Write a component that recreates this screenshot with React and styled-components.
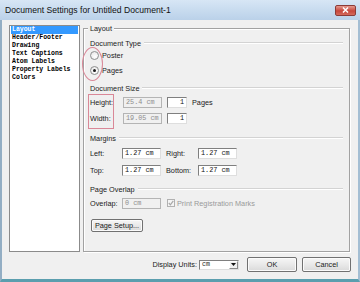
import React from "react";
import styled, { createGlobalStyle } from "styled-components";

const GlobalStyle = createGlobalStyle`
  html, body { margin: 0; padding: 0; background: #ffffff; }
  body { font-family: "Liberation Sans", Arial, sans-serif; }
`;

const Window = styled.div`
  width: 360px;
  height: 282px;
  display: flex;
  flex-direction: column;
  overflow: hidden;
  background: #f0f0f0;
`;

const TitleBar = styled.div`
  height: 20px;
  flex: none;
  display: flex;
  align-items: center;
  justify-content: space-between;
  padding: 0 4px 0 5px;
  box-sizing: border-box;
  background: linear-gradient(#d7e6f5, #bad1e9);
  font-size: 8.6px;
  color: #111;
`;

const CloseButton = styled.div`
  width: 21px;
  height: 11px;
  box-sizing: border-box;
  display: flex;
  align-items: center;
  justify-content: center;
  border: 1px solid #8c3b37;
  border-radius: 2px;
  background: linear-gradient(#e59a8f, #c7463b 55%, #d46a5c);
`;

const Frame = styled.div`
  flex: 1;
  display: flex;
  flex-direction: column;
  box-sizing: border-box;
  border-left: 2px solid #93aec4;
  border-right: 2px solid #a4bed3;
  border-bottom: 3px solid #5b9eae;
  padding: 5px 8px 7px 7px;
`;

const MainRow = styled.div`
  height: 227px;
  flex: none;
  display: flex;
  gap: 3px;
`;

const List = styled.ul`
  width: 71px;
  flex: none;
  margin: 0;
  padding: 0 1px;
  list-style: none;
  box-sizing: border-box;
  background: #fff;
  border: 1px solid #8b8b8b;
  font-family: "Liberation Mono", "Courier New", monospace;
  font-size: 6.5px;
  font-weight: bold;
  line-height: 8px;
`;

const Item = styled.li`
  padding-left: 1px;
  white-space: nowrap;
  background: ${(p) => (p.$selected ? "#3399ff" : "transparent")};
  color: ${(p) => (p.$selected ? "#fff" : "#000")};
`;

const Group = styled.div`
  position: relative;
  flex: 1;
  margin-top: 3px;
  box-sizing: border-box;
  border: 1px solid #a2a2a2;
  box-shadow: inset 1px 1px 0 #fff, 1px 1px 0 #fff;
  padding: 9px 6px 0 6px;
  display: flex;
  flex-direction: column;
  font-size: 7.3px;
  color: #1b1b1b;
`;

const Legend = styled.span`
  position: absolute;
  top: -5px;
  left: 4px;
  padding: 0 2px;
  line-height: 9px;
  background: #f0f0f0;
`;

const SectionHead = styled.div`
  display: flex;
  align-items: center;
  gap: 3px;
  height: 10px;
  margin-top: ${(p) => p.$mt || 0}px;
  white-space: nowrap;
  &::after {
    content: "";
    flex: 1;
    border-top: 1px solid #d3d3d3;
    border-bottom: 1px solid #fff;
  }
`;

const Row = styled.div`
  display: flex;
  align-items: center;
  height: 12px;
  margin-top: ${(p) => p.$mt || 0}px;
  gap: ${(p) => p.$gap || 0}px;
  white-space: nowrap;
`;

const Radio = styled.span`
  width: 9px;
  height: 9px;
  box-sizing: border-box;
  border-radius: 50%;
  border: 1px solid #8e8f8f;
  background: radial-gradient(circle at 60% 65%, #ffffff, #e3e3e3);
  display: flex;
  align-items: center;
  justify-content: center;
  &::after {
    content: "";
    width: 3px;
    height: 3px;
    border-radius: 50%;
    background: ${(p) => (p.$checked ? "#1c1c1c" : "transparent")};
  }
`;

const FieldLabel = styled.span`
  width: ${(p) => p.$w}px;
  flex: none;
`;

const TextBox = styled.div`
  width: ${(p) => p.$w}px;
  height: 11px;
  flex: none;
  box-sizing: border-box;
  padding: 0 2px;
  display: flex;
  align-items: center;
  justify-content: ${(p) => (p.$right ? "flex-end" : "flex-start")};
  font-family: "Liberation Mono", "Courier New", monospace;
  font-size: 6.8px;
  background: ${(p) => (p.$disabled ? "#f0f0f0" : "#fff")};
  color: ${(p) => (p.$disabled ? "#8d8d8d" : "#111")};
  border: 1px solid;
  border-color: ${(p) =>
    p.$disabled ? "#b4b4b4" : "#7f7f7f #dedede #dedede #7f7f7f"};
`;

const Gap = styled.span`
  width: ${(p) => p.$w}px;
  flex: none;
`;

const CheckBox = styled.span`
  width: 8px;
  height: 8px;
  flex: none;
  box-sizing: border-box;
  border: 1px solid #b1b1b1;
  background: #f4f4f4;
  display: flex;
  align-items: center;
  justify-content: center;
  margin-right: 2px;
`;

const Muted = styled.span`
  color: #9a9a9a;
`;

const Button = styled.div`
  width: ${(p) => p.$w}px;
  height: ${(p) => p.$h}px;
  flex: none;
  box-sizing: border-box;
  display: flex;
  align-items: center;
  justify-content: center;
  border: 1px solid #717171;
  border-radius: 2px;
  background: linear-gradient(#f6f6f6, #e9e9e9 50%, #dadada);
  box-shadow: inset 0 0 0 1px #fbfbfb;
  font-size: 7.3px;
  color: #1b1b1b;
  margin-top: ${(p) => p.$mt || 0}px;
  margin-left: ${(p) => p.$ml || 0}px;
`;

const Footer = styled.div`
  height: 15px;
  flex: none;
  margin-top: 5px;
  margin-right: -1px;
  display: flex;
  align-items: center;
  justify-content: flex-end;
  font-size: 7.3px;
  color: #1b1b1b;
`;

const Select = styled.div`
  width: 40px;
  height: 10px;
  box-sizing: border-box;
  margin: 0 8px 0 2px;
  display: flex;
  align-items: stretch;
  background: #fff;
  border: 1px solid;
  border-color: #7f7f7f #dedede #dedede #7f7f7f;
  font-family: "Liberation Mono", "Courier New", monospace;
  font-size: 6.6px;
`;

const SelectValue = styled.span`
  flex: 1;
  padding-left: 2px;
  line-height: 8px;
`;

const SelectArrow = styled.span`
  width: 9px;
  box-sizing: border-box;
  display: flex;
  align-items: center;
  justify-content: center;
  background: #efefef;
  border: 1px solid;
  border-color: #fff #8a8a8a #8a8a8a #fff;
`;

const RedEllipse = styled.span`
  position: absolute;
  left: -2px;
  top: 18px;
  width: 21px;
  height: 34px;
  box-sizing: border-box;
  border: 1px solid #d98898;
  border-radius: 50%;
`;

const RedBox = styled.span`
  position: absolute;
  left: 4px;
  top: 65px;
  width: 26px;
  height: 35px;
  box-sizing: border-box;
  border: 1px solid #d98898;
`;

const sections = [
  "Layout",
  "Header/Footer",
  "Drawing",
  "Text Captions",
  "Atom Labels",
  "Property Labels",
  "Colors",
];

export default function App() {
  return (
    <>
      <GlobalStyle />
      <Window>
        <TitleBar>
          <span>Document Settings for Untitled Document-1</span>
          <CloseButton>
            <svg width="7" height="6" viewBox="0 0 7 6">
              <path d="M1 0.5 L6 5.5 M6 0.5 L1 5.5" stroke="#fff" strokeWidth="1.5" />
            </svg>
          </CloseButton>
        </TitleBar>
        <Frame>
          <MainRow>
            <List>
              {sections.map((s, i) => (
                <Item key={s} $selected={i === 0}>
                  {s}
                </Item>
              ))}
            </List>
            <Group>
              <Legend>Layout</Legend>
              <RedEllipse />
              <RedBox />

              <SectionHead>Document Type</SectionHead>
              <Row $mt={1} $gap={3}>
                <Radio />
                <span>Poster</span>
              </Row>
              <Row $mt={3} $gap={3}>
                <Radio $checked />
                <span>Pages</span>
              </Row>

              <SectionHead $mt={7}>Document Size</SectionHead>
              <Row $mt={3}>
                <FieldLabel $w={33}>Height:</FieldLabel>
                <TextBox $w={39} $disabled>25.4 cm</TextBox>
                <Gap $w={5} />
                <TextBox $w={20} $right>1</TextBox>
                <Gap $w={5} />
                <span>Pages</span>
              </Row>
              <Row $mt={4}>
                <FieldLabel $w={33}>Width:</FieldLabel>
                <TextBox $w={39} $disabled>19.05 cm</TextBox>
                <Gap $w={5} />
                <TextBox $w={20} $right>1</TextBox>
              </Row>

              <SectionHead $mt={9}>Margins</SectionHead>
              <Row $mt={4}>
                <FieldLabel $w={32}>Left:</FieldLabel>
                <TextBox $w={39}>1.27 cm</TextBox>
                <Gap $w={5} />
                <FieldLabel $w={32}>Right:</FieldLabel>
                <TextBox $w={39}>1.27 cm</TextBox>
              </Row>
              <Row $mt={5}>
                <FieldLabel $w={32}>Top:</FieldLabel>
                <TextBox $w={39}>1.27 cm</TextBox>
                <Gap $w={5} />
                <FieldLabel $w={32}>Bottom:</FieldLabel>
                <TextBox $w={39}>1.27 cm</TextBox>
              </Row>

              <SectionHead $mt={8}>Page Overlap</SectionHead>
              <Row $mt={3}>
                <FieldLabel $w={32}>Overlap:</FieldLabel>
                <TextBox $w={39} $disabled>0 cm</TextBox>
                <Gap $w={6} />
                <CheckBox>
                  <svg width="6" height="6" viewBox="0 0 6 6">
                    <path d="M0.8 3 L2.4 4.8 L5.3 0.8" stroke="#a8a8a8" strokeWidth="1.2" fill="none" />
                  </svg>
                </CheckBox>
                <Muted>Print Registration Marks</Muted>
              </Row>

              <Button $w={52} $h={13} $mt={10} $ml={1}>
                Page Setup...
              </Button>
            </Group>
          </MainRow>
          <Footer>
            <span>Display Units:</span>
            <Select>
              <SelectValue>cm</SelectValue>
              <SelectArrow>
                <svg width="5" height="3" viewBox="0 0 5 3">
                  <path d="M0 0 H5 L2.5 3 Z" fill="#111" />
                </svg>
              </SelectArrow>
            </Select>
            <Button $w={50} $h={15}>OK</Button>
            <Button $w={49} $h={15} $ml={5}>
              Cancel
            </Button>
          </Footer>
        </Frame>
      </Window>
    </>
  );
}
